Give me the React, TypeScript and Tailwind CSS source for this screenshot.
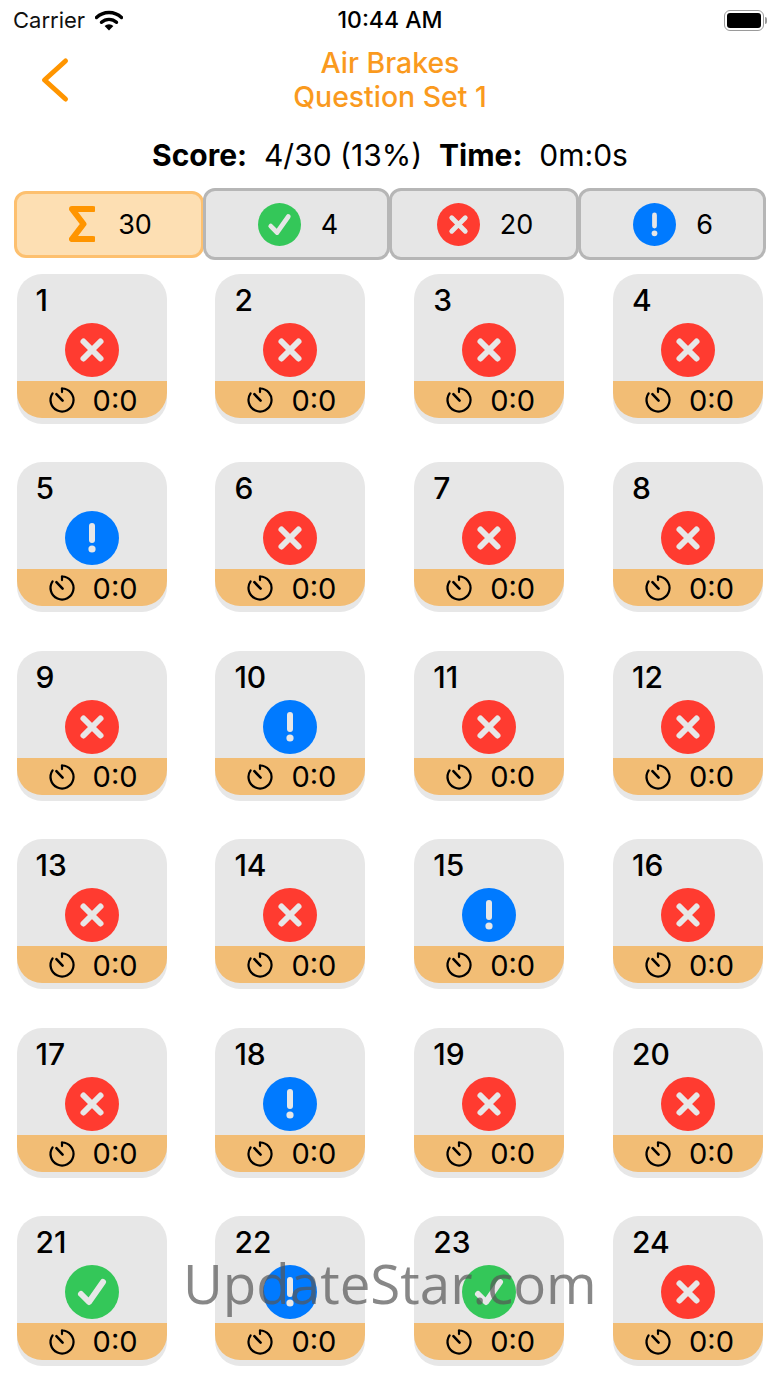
type Status = "right" | "wrong" | "skipped";

const results: Status[] = [
  "wrong", "wrong", "wrong", "wrong",
  "skipped", "wrong", "wrong", "wrong",
  "wrong", "skipped", "wrong", "wrong",
  "wrong", "wrong", "skipped", "wrong",
  "wrong", "skipped", "wrong", "wrong",
  "right", "skipped", "right", "wrong",
];

const StatusIcon = ({ status, size, mark }: { status: Status; size: number; mark: string }) => {
  const fill = status === "right" ? "#34c759" : status === "wrong" ? "#ff3b30" : "#007aff";
  return (
    <svg width={size} height={size} viewBox="0 0 54 54" className="shrink-0">
      <circle cx="27" cy="27" r="27" fill={fill} />
      {status === "right" && (
        <path d="M16 29l8 8 14-20" fill="none" stroke={mark} strokeWidth="6" strokeLinecap="round" strokeLinejoin="round" />
      )}
      {status === "wrong" && (
        <path d="M18.5 18.5l17 17M35.5 18.5l-17 17" fill="none" stroke={mark} strokeWidth="6" strokeLinecap="round" />
      )}
      {status === "skipped" && (
        <>
          <path d="M27 15v14" fill="none" stroke={mark} strokeWidth="6" strokeLinecap="round" />
          <circle cx="27" cy="38" r="3.6" fill={mark} />
        </>
      )}
    </svg>
  );
};

const TimerIcon = () => (
  <svg width="28" height="28" viewBox="0 0 28 28" className="shrink-0">
    <path
      d="M14 2.5a11.5 11.5 0 1 1-9.4 4.9"
      fill="none"
      stroke="#000"
      strokeWidth="2.2"
      strokeLinecap="round"
    />
    <path d="M14.6 14.6L8.4 8.2" fill="none" stroke="#000" strokeWidth="2.6" strokeLinecap="round" />
    <path d="M14 2.5v3.6" fill="none" stroke="#000" strokeWidth="2.2" strokeLinecap="round" />
  </svg>
);

const QuestionCard = ({ number, status }: { number: number; status: Status }) => (
  <div className="flex h-[150px] w-[150px] flex-col overflow-hidden rounded-[25px] bg-[#e7e7e7]">
    <div className="h-[49px] pl-[19px] pt-[8px] text-[30px] font-[550] leading-[36px] text-black">{number}</div>
    <div className="flex justify-center">
      <StatusIcon status={status} size={54} mark="#e7e7e7" />
    </div>
    <div className="mt-[4px] flex h-[37px] items-center justify-center gap-[17px] rounded-b-[25px] bg-[#f2bd75] pl-[2px] pt-[1px]">
      <TimerIcon />
      <span className="text-[29px] leading-none text-black">0:0</span>
    </div>
  </div>
);

const Tab = ({ status, count, className }: { status: Status; count: number; className: string }) => (
  <div
    className={`flex h-[72px] items-center justify-center gap-[20px] rounded-[12px] border-[3px] border-[#b6b6b6] bg-[#e6e6e6] ${className}`}
  >
    <StatusIcon status={status} size={43} mark="#e6e6e6" />
    <span className="text-[27px] leading-none text-black">{count}</span>
  </div>
);

export default function App() {
  return (
    <div className="relative h-[1387px] w-[780px] overflow-hidden bg-white font-['Inter',sans-serif] text-black">
      {/* status bar */}
      <div className="flex h-[40px] items-center justify-between pl-[13px] pr-[13px]">
        <div className="flex w-[200px] items-center gap-[10px]">
          <span className="text-[22px] leading-none text-[#111]">Carrier</span>
          <svg width="28" height="21" viewBox="0 0 28 21">
            <path d="M1.5 7.5a18 18 0 0 1 25 0" fill="none" stroke="#000" strokeWidth="3.4" strokeLinecap="round" />
            <path d="M6.5 12.3a11 11 0 0 1 15 0" fill="none" stroke="#000" strokeWidth="3.4" strokeLinecap="round" />
            <path d="M14 20.5l-4.4-4.6a6.4 6.4 0 0 1 8.8 0z" fill="#000" />
          </svg>
        </div>
        <span className="text-[23px] font-medium leading-none">10:44 AM</span>
        <div className="flex w-[200px] items-center justify-end">
          <div className="flex h-[21px] w-[40px] items-center rounded-[6px] border-[1.5px] border-[#9a9a9a] p-[2px]">
            <div className="h-full w-full rounded-[3px] bg-black" />
          </div>
          <div className="ml-[1px] h-[7px] w-[2px] rounded-r-full bg-[#9a9a9a]" />
        </div>
      </div>

      {/* navigation title */}
      <div className="grid h-[78px] grid-cols-[1fr_auto_1fr] items-center">
        <svg width="30" height="46" viewBox="0 0 30 46" className="ml-[40px] mt-[2px]">
          <path d="M25.5 4L4.5 23l21 19" fill="none" stroke="#ff9500" strokeWidth="5" strokeLinecap="round" strokeLinejoin="round" />
        </svg>
        <div className="pt-[1px] text-center text-[28.4px] font-medium leading-[34px] text-[#fa9a1e]">
          <div>Air Brakes</div>
          <div>Question Set 1</div>
        </div>
        <div />
      </div>

      {/* score line */}
      <div className="mt-[19px] flex h-[36px] items-center justify-center whitespace-pre text-[30px] leading-none">
        <span className="font-bold">Score:</span>
        <span>  4/30 (13%)  </span>
        <span className="font-bold">Time:</span>
        <span>  0m:0s</span>
      </div>

      {/* filter tabs */}
      <div className="mt-[15px] flex h-[72px] items-center pl-[14px]">
        <div className="flex h-[67px] w-[190px] shrink-0 items-center justify-center gap-[23px] rounded-[12px] border-[3px] border-[#fdc06f] bg-[#fddfb3]">
          <svg width="26" height="38" viewBox="0 0 26 38" className="ml-[3px] shrink-0">
            <path d="M24 4H3l11.5 15L3 34h21" fill="none" stroke="#ff9500" strokeWidth="6" strokeLinecap="round" strokeLinejoin="round" />
          </svg>
          <span className="text-[27px] leading-none text-black">30</span>
        </div>
        <Tab status="right" count={4} className="-ml-[1px] w-[187px] shrink-0 pl-[3px]" />
        <Tab status="wrong" count={20} className="-ml-[1px] w-[190px] shrink-0 pl-[2px]" />
        <Tab status="skipped" count={6} className="-ml-[1px] w-[188px] shrink-0 pl-[2px]" />
      </div>

      {/* question grid */}
      <div className="mt-[14px] grid grid-cols-[150px_150px_150px_150px] justify-between gap-y-[38.4px] pl-[16.6px] pr-[17px]">
        {results.map((status, idx) => (
          <QuestionCard key={idx} number={idx + 1} status={status} />
        ))}
      </div>

      {/* site stamp */}
      <div className="absolute left-[183px] top-[1245px] font-['Open_Sans',sans-serif] text-[54.7px] leading-[76px] text-[#555555]/70">
        UpdateStar.com
      </div>
    </div>
  );
}
